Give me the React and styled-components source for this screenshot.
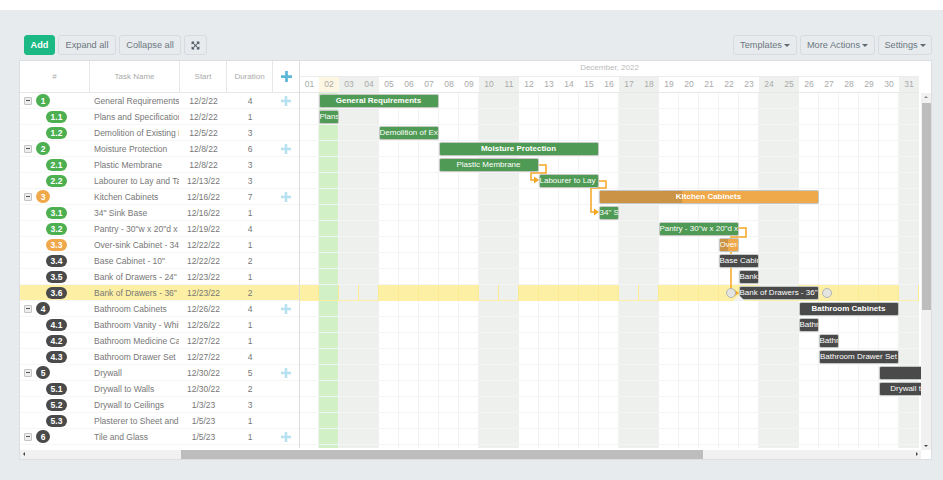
import React from "react";
import styled, { createGlobalStyle } from "styled-components";
import { FaExpandArrowsAlt } from "react-icons/fa";

const GREEN = "#4caf50";
const ORANGE = "#f0a94a";
const DARK = "#4a4a4a";

const barColors = {
  [GREEN]: "#4f9a54",
  [ORANGE]: "#f0a94a",
  [DARK]: "#4a4a4a",
};

const tasks = [
  { id: "1", name: "General Requirements", start: "12/2/22", dur: 4, color: GREEN, day: 2, days: 6 },
  { id: "1.1", name: "Plans and Specifications", start: "12/2/22", dur: 1, color: GREEN, day: 2, days: 1 },
  { id: "1.2", name: "Demolition of Existing Kitchen", start: "12/5/22", dur: 3, color: GREEN, day: 5, days: 3 },
  { id: "2", name: "Moisture Protection", start: "12/8/22", dur: 6, color: GREEN, day: 8, days: 8 },
  { id: "2.1", name: "Plastic Membrane", start: "12/8/22", dur: 3, color: GREEN, day: 8, days: 5 },
  { id: "2.2", name: "Labourer to Lay and Tape", start: "12/13/22", dur: 3, color: GREEN, day: 13, days: 3 },
  { id: "3", name: "Kitchen Cabinets", start: "12/16/22", dur: 7, color: ORANGE, day: 16, days: 11, progress: 38 },
  { id: "3.1", name: "34\" Sink Base", start: "12/16/22", dur: 1, color: GREEN, day: 16, days: 1 },
  { id: "3.2", name: "Pantry - 30\"w x 20\"d x 84\"h", start: "12/19/22", dur: 4, color: GREEN, day: 19, days: 4 },
  { id: "3.3", name: "Over-sink Cabinet - 34\"", start: "12/22/22", dur: 1, color: ORANGE, day: 22, days: 1, progress: 45 },
  { id: "3.4", name: "Base Cabinet - 10\"", start: "12/22/22", dur: 2, color: DARK, day: 22, days: 2 },
  { id: "3.5", name: "Bank of Drawers - 24\"", start: "12/23/22", dur: 1, color: DARK, day: 23, days: 1 },
  { id: "3.6", name: "Bank of Drawers - 36\"", start: "12/23/22", dur: 2, color: DARK, day: 23, days: 4, selected: true },
  { id: "4", name: "Bathroom Cabinets", start: "12/26/22", dur: 4, color: DARK, day: 26, days: 5 },
  { id: "4.1", name: "Bathroom Vanity - White", start: "12/26/22", dur: 1, color: DARK, day: 26, days: 1 },
  { id: "4.2", name: "Bathroom Medicine Cabinet", start: "12/27/22", dur: 1, color: DARK, day: 27, days: 1 },
  { id: "4.3", name: "Bathroom Drawer Set", start: "12/27/22", dur: 4, color: DARK, day: 27, days: 4 },
  { id: "5", name: "Drywall", start: "12/30/22", dur: 5, color: DARK, day: 30, days: 7 },
  { id: "5.1", name: "Drywall to Walls", start: "12/30/22", dur: 2, color: DARK, day: 30, days: 4 },
  { id: "5.2", name: "Drywall to Ceilings", start: "1/3/23", dur: 3, color: DARK },
  { id: "5.3", name: "Plasterer to Sheet and Tape", start: "1/5/23", dur: 1, color: DARK },
  { id: "6", name: "Tile and Glass", start: "1/5/23", dur: 1, color: DARK },
];

const dayList = Array.from({ length: 31 }, (_, i) => i + 1);
const isWeekend = (d) => [3, 4, 10, 11, 17, 18, 24, 25, 31].includes(d);
const dayLeft = (d) => 19 + (d - 2) * 20;

const GlobalStyle = createGlobalStyle`
  html, body {
    margin: 0;
    padding: 0;
    background: #fff;
  }
  body {
    font-family: "Liberation Sans", Arial, sans-serif;
  }
`;

const Page = styled.div`
  margin-top: 10px;
  height: 470px;
  box-sizing: border-box;
  padding: 25px 11px 0 19px;
  background: #e8ebee;
  overflow: hidden;
`;

const Toolbar = styled.div`
  display: flex;
  justify-content: space-between;
  height: 20px;
  margin-bottom: 5px;
  padding-left: 5px;
`;

const ButtonGroup = styled.div`
  display: flex;
  gap: 3px;
`;

const Button = styled.button`
  display: flex;
  align-items: center;
  justify-content: center;
  gap: 2px;
  box-sizing: border-box;
  width: ${(p) => p.$width}px;
  height: 20px;
  padding: 0;
  font: ${(p) => (p.$primary ? "bold" : "normal")} 9.2px "Liberation Sans", Arial, sans-serif;
  color: ${(p) => (p.$primary ? "#fff" : "#6b7780")};
  background: ${(p) => (p.$primary ? "#1cb985" : "#e8ebee")};
  border: 1px solid ${(p) => (p.$primary ? "#1cb985" : "#d7dbdf")};
  border-radius: 3px;
`;

const Caret = styled.span`
  width: 0;
  height: 0;
  border-left: 3px solid transparent;
  border-right: 3px solid transparent;
  border-top: 3px solid #5f6b74;
`;

const Chart = styled.div`
  display: flex;
  flex-direction: column;
  box-sizing: border-box;
  width: 913px;
  height: 400px;
  background: #fff;
  border: 1px solid #dcdfe2;
  color: #777;
  font-size: 8.5px;
`;

const ChartMain = styled.div`
  display: flex;
  height: 389px;
`;

const Grid = styled.div`
  box-sizing: border-box;
  width: 280px;
  height: 387px;
  flex: none;
  border-right: 1px solid #ddd;
`;

const columns = "70px 90px 47px 46px 26px";

const GridHead = styled.div`
  display: grid;
  grid-template-columns: ${columns};
  height: 32px;
  box-sizing: border-box;
  border-bottom: 1px solid #e6e6e6;
`;

const HeadCell = styled.div`
  display: flex;
  align-items: center;
  justify-content: center;
  box-sizing: border-box;
  padding-bottom: 1px;
  color: #aaa;
  font-size: 8px;
  border-right: 1px solid #e6e6e6;
  &:last-child {
    border-right: 0;
  }
`;

const GridRow = styled.div`
  display: grid;
  grid-template-columns: ${columns};
  align-items: center;
  box-sizing: border-box;
  height: 16px;
  background: ${(p) => (p.$selected ? "#fdf0a5" : "#fff")};
  border-bottom: 1px solid #f6f6f6;
`;

const NumberCell = styled.div`
  display: flex;
  align-items: center;
  gap: 4px;
  padding-left: ${(p) => (p.$child ? 26 : 4)}px;
`;

const Toggle = styled.span`
  position: relative;
  box-sizing: border-box;
  width: 8px;
  height: 8px;
  background: #eee;
  border: 1px solid #c4c4c4;
  border-radius: 1px;
  &::after {
    content: "";
    position: absolute;
    left: 1px;
    top: 2px;
    width: 4px;
    height: 1px;
    background: #555;
  }
`;

const Badge = styled.span`
  display: flex;
  align-items: center;
  justify-content: center;
  width: ${(p) => (p.$child ? 21 : 14)}px;
  height: ${(p) => (p.$child ? 12 : 13)}px;
  border-radius: 7px;
  background: ${(p) => p.$color};
  color: #fff;
  font-size: 8.5px;
  font-weight: bold;
`;

const NameCell = styled.div`
  margin: 0 1px 0 4px;
  white-space: nowrap;
  overflow: hidden;
`;

const CenterCell = styled.div`
  text-align: center;
  white-space: nowrap;
`;

const PlusCell = styled.div`
  display: flex;
  justify-content: center;
  padding-right: 1px;
`;

const RightPane = styled.div`
  display: flex;
  height: 389px;
`;

const Timeline = styled.div`
  width: 621px;
  flex: none;
`;

const MonthRow = styled.div`
  box-sizing: border-box;
  width: 619px;
  height: 16px;
  line-height: 13px;
  text-align: center;
  color: #bbb;
  font-size: 8px;
  border-bottom: 1px solid #ececec;
`;

const DayGrid = styled.div`
  display: grid;
  grid-template-columns: 19px repeat(30, 20px);
`;

const DayHead = styled.div`
  box-sizing: border-box;
  height: 16px;
  line-height: 14px;
  text-align: center;
  color: #aaa;
  font-size: 8.5px;
  background: ${(p) => (p.$today ? "#fdf6e3" : p.$weekend ? "#eef0ee" : "#fff")};
  border-bottom: 1px solid #e8e8e8;
`;

const TimelineBody = styled.div`
  position: relative;
  height: 355px;
  overflow: hidden;
`;

const DayCell = styled.div`
  box-sizing: border-box;
  height: 16px;
  background: ${(p) =>
    p.$today ? "#d2f0c6" : p.$weekend ? "#eef0ee" : p.$selected ? "#fdf0a5" : "#fff"};
  border-right: 1px solid ${(p) => (p.$selected ? "#fde98f" : p.$weekend ? "#eef0ee" : "#f2f2f2")};
  border-bottom: 1px solid ${(p) => (p.$selected ? "#fdf0a5" : "#f4f4f4")};
`;

const Links = styled.svg`
  position: absolute;
  left: 0;
  top: 0;
  width: 621px;
  height: 355px;
`;

const Bar = styled.div`
  position: absolute;
  box-sizing: border-box;
  height: 14px;
  line-height: 11px;
  overflow: hidden;
  text-align: center;
  white-space: nowrap;
  color: #fff;
  font-size: 8px;
  font-weight: ${(p) => (p.$bold ? "bold" : "normal")};
  background: ${(p) => p.$color};
  border: 1px solid #c4c8c4;
  border-radius: 2px;
`;

const BarFill = styled.div`
  position: absolute;
  left: 0;
  top: 0;
  bottom: 0;
  background: #cb9346;
`;

const BarLabel = styled.span`
  position: relative;
`;

const Handle = styled.span`
  position: absolute;
  top: 195px;
  box-sizing: border-box;
  width: 10px;
  height: 10px;
  border-radius: 50%;
  background: #e4e4e0;
  border: 1px solid #b4b4b4;
`;

const Pointer = styled.span`
  position: absolute;
  left: 433px;
  top: 202px;
  width: 0;
  height: 0;
  border-left: 6px solid transparent;
  border-right: 6px solid transparent;
  border-bottom: 6px solid #f0f0ee;
`;

const VScroll = styled.div`
  position: relative;
  width: 10px;
  height: 357px;
  margin-top: 32px;
  background: #f1f1f1;
`;

const VThumb = styled.div`
  position: absolute;
  left: 1px;
  top: 10px;
  width: 9px;
  height: 207px;
  background: #bdbdbd;
`;

const Arrow = styled.span`
  position: absolute;
  width: 0;
  height: 0;
  ${(p) => p.$side}: 3px;
  ${(p) => p.$pos};
  border: 2.5px solid transparent;
  ${(p) => p.$border};
`;

const HScrollRow = styled.div`
  display: flex;
  height: 9px;
`;

const HScroll = styled.div`
  position: relative;
  width: 901px;
  background: #f1f1f1;
`;

const HThumb = styled.div`
  position: absolute;
  left: 161px;
  top: 0;
  width: 522px;
  height: 9px;
  background: #bdbdbd;
`;

const PlusIcon = ({ size, thick, color }) => (
  <svg width={size} height={size} viewBox="0 0 12 12">
    <path d="M6 0v12M0 6h12" stroke={color} strokeWidth={thick} fill="none" />
  </svg>
);

const LinkPath = ({ d, tipX, tipY }) => (
  <>
    <path d={d} fill="none" stroke="#f5a623" strokeWidth="1.5" />
    <path d={`M${tipX} ${tipY}l-5 -3.5v7z`} fill="#f5a623" />
  </>
);

export default function App() {
  const rows = [...tasks, null];
  return (
    <>
      <GlobalStyle />
      <Page>
        <Toolbar>
          <ButtonGroup>
            <Button $primary $width={31}>Add</Button>
            <Button $width={58}>Expand all</Button>
            <Button $width={62}>Collapse all</Button>
            <Button $width={23}><FaExpandArrowsAlt size={9} color="#4d5b68" /></Button>
          </ButtonGroup>
          <ButtonGroup>
            <Button $width={64}>Templates<Caret /></Button>
            <Button $width={75}>More Actions<Caret /></Button>
            <Button $width={54}>Settings<Caret /></Button>
          </ButtonGroup>
        </Toolbar>
        <Chart>
          <ChartMain>
            <Grid>
              <GridHead>
                <HeadCell>#</HeadCell>
                <HeadCell>Task Name</HeadCell>
                <HeadCell>Start</HeadCell>
                <HeadCell>Duration</HeadCell>
                <HeadCell><PlusIcon size={11} thick={3} color="#5cb8d8" /></HeadCell>
              </GridHead>
              {tasks.map((t) => {
                const child = t.id.includes(".");
                return (
                  <GridRow key={t.id} $selected={t.selected}>
                    <NumberCell $child={child}>
                      {!child && <Toggle />}
                      <Badge $child={child} $color={t.color}>{t.id}</Badge>
                    </NumberCell>
                    <NameCell>{t.name}</NameCell>
                    <CenterCell>{t.start}</CenterCell>
                    <CenterCell>{t.dur}</CenterCell>
                    <PlusCell>
                      {!child && <PlusIcon size={10} thick={3} color="#b5e0ef" />}
                    </PlusCell>
                  </GridRow>
                );
              })}
            </Grid>
            <RightPane>
              <Timeline>
                <MonthRow>December, 2022</MonthRow>
                <DayGrid>
                  {dayList.map((d) => (
                    <DayHead key={d} $today={d === 2} $weekend={isWeekend(d)}>
                      {String(d).padStart(2, "0")}
                    </DayHead>
                  ))}
                </DayGrid>
                <TimelineBody>
                  {rows.map((t, i) => (
                    <DayGrid key={i}>
                      {dayList.map((d) => (
                        <DayCell
                          key={d}
                          $today={d === 2}
                          $weekend={isWeekend(d)}
                          $selected={t && t.selected}
                        />
                      ))}
                    </DayGrid>
                  ))}
                  <Links viewBox="0 0 621 355">
                    <LinkPath d="M238 72H246V80H231V87H236" tipX={239} tipY={87} />
                    <LinkPath d="M298 88H306V95H291V119H296" tipX={299} tipY={119} />
                    <LinkPath d="M438 135H446V144H431V200H436" tipX={439} tipY={200} />
                  </Links>
                  {tasks.map((t, i) =>
                    t.day ? (
                      <Bar
                        key={t.id}
                        $bold={!t.id.includes(".")}
                        $color={barColors[t.color]}
                        style={{
                          left: dayLeft(t.day) - 0.5,
                          top: 16 * i + 1,
                          width: t.days * 20,
                        }}
                      >
                        {t.progress && <BarFill style={{ width: `${t.progress}%` }} />}
                        {t.id !== "5" && <BarLabel>{t.name}</BarLabel>}
                      </Bar>
                    ) : null
                  )}
                  <Handle style={{ left: 426 }} />
                  <Handle style={{ left: 522 }} />
                  <Pointer />
                </TimelineBody>
              </Timeline>
              <VScroll>
                <Arrow $side="left" $pos="top: 3px" $border="border-bottom-color: #888; border-top-width: 0" />
                <VThumb />
                <Arrow $side="left" $pos="bottom: 3px" $border="border-top-color: #444; border-bottom-width: 0" />
              </VScroll>
            </RightPane>
          </ChartMain>
          <HScrollRow>
            <HScroll>
              <Arrow $side="left" $pos="top: 2px" $border="border-right-color: #444; border-left-width: 0" />
              <HThumb />
              <Arrow $side="right" $pos="top: 2px" $border="border-left-color: #444; border-right-width: 0" />
            </HScroll>
          </HScrollRow>
        </Chart>
      </Page>
    </>
  );
}
